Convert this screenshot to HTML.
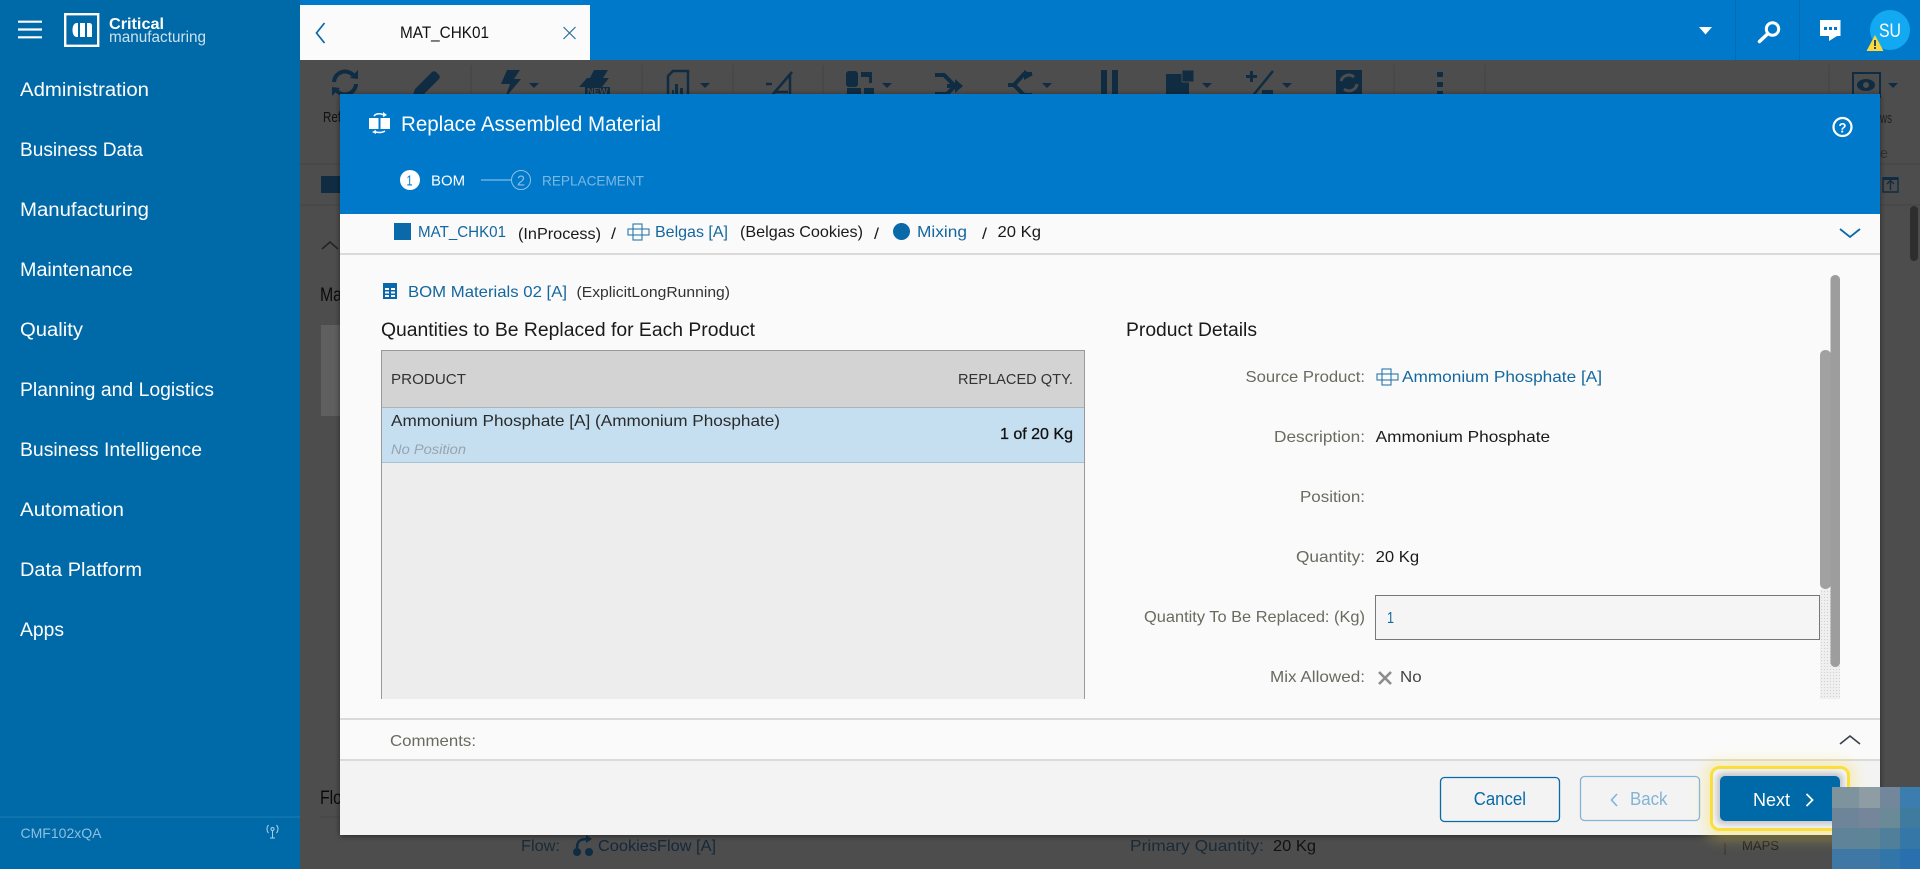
<!DOCTYPE html>
<html lang="en">
<head>
<meta charset="utf-8">
<title>Replace Assembled Material</title>
<style>
html,body{margin:0;padding:0;width:1920px;height:869px;overflow:hidden;background:#4d4d4d}
svg{display:block;position:absolute;left:0;top:0}
text{font-family:"Liberation Sans",sans-serif;font-size:16px;white-space:pre}
.m{font-size:19px;fill:#fff}
.link{fill:#14679f}
.lab{fill:#6a6a60}
.blk{fill:#1a1a1a}
.d{fill:#0f2c42}
.ds{fill:none;stroke:#0f2c42;stroke-width:4}
.sep{stroke:#444;stroke-width:1}
</style>
</head>
<body>
<svg width="1920" height="869" viewBox="0 0 1920 869" xmlns="http://www.w3.org/2000/svg">
<defs>
<filter id="blur" x="-30%" y="-60%" width="160%" height="220%"><feGaussianBlur stdDeviation="7"/></filter>
<filter id="sh" x="-5%" y="-5%" width="110%" height="110%"><feDropShadow dx="0" dy="1" stdDeviation="3" flood-color="#000" flood-opacity=".5"/></filter>
<filter id="bsh" x="-10%" y="-30%" width="120%" height="160%"><feGaussianBlur stdDeviation="3"/></filter>
<pattern id="dots" width="3" height="3" patternUnits="userSpaceOnUse"><rect width="3" height="3" fill="#efefef"/><rect width="1" height="1" fill="#d0d0d0"/></pattern>
</defs>

<!-- dimmed page behind -->
<rect x="300" y="60" width="1620" height="809" fill="#4d4d4d"/>
<g class="sep">
<line x1="471" y1="65" x2="471" y2="94"/><line x1="642" y1="65" x2="642" y2="94"/><line x1="733" y1="65" x2="733" y2="94"/><line x1="823" y1="65" x2="823" y2="94"/><line x1="1394" y1="65" x2="1394" y2="94"/><line x1="1485" y1="65" x2="1485" y2="94"/><line x1="1829" y1="65" x2="1829" y2="94"/>
<line x1="300" y1="164" x2="340" y2="164"/><line x1="1880" y1="164" x2="1920" y2="164"/>
<line x1="300" y1="205" x2="340" y2="205"/><line x1="1880" y1="205" x2="1920" y2="205"/>
<line x1="320" y1="817" x2="340" y2="817"/>
</g>
<!-- toolbar icons -->
<path class="ds" d="M334 82a11 11 0 0 1 19-7M356 84a11 11 0 0 1-19 7"/>
<path class="d" d="M350 78l8-8v9zM340 88l-8 8v-9z"/>
<path class="d" d="M411 100l4-11L432 72a3 3 0 0 1 4 0l3 3a3 3 0 0 1 0 4L422 96z"/>
<path class="d" d="M507 70h13l-6 9h7l-16 19 5-14h-9z"/>
<path class="d" d="M529 83h10l-5 5z"/>
<path class="d" d="M594 70h14l-5 8h6l-7 9h-23l8-9h3z"/>
<rect x="585" y="87" width="25" height="8" fill="#0f2c42"/>
<text x="587" y="94" textLength="21" lengthAdjust="spacingAndGlyphs" font-size="8" font-weight="700" fill="#4d4d4d" style="font-size:8px">NEW</text>
<path class="ds" style="stroke-width:2.500" d="M668 94V76l5-5h15v23"/>
<path class="d" d="M675 84h3v10h-3zM680 88h3v6h-3zM672 90h2v4h-2z"/>
<path class="d" d="M700 83h10l-5 5z"/>
<path class="ds" style="stroke-width:2.500" d="M766 84h6M768 100l24-28M790 74v20M774 92h14"/>
<rect x="846" y="71" width="12" height="16" rx="3" fill="#0f2c42"/>
<path class="d" d="M861 72h11v11h-3v-6h-8zM847 88h14v6h-14zM864 88h10v6h-10z"/>
<path class="d" d="M882 83h10l-5 5z"/>
<path class="ds" d="M935 75h9l11 11-8 8h-12M947 86h14"/>
<path class="d" d="M955 79l8 7-8 7z"/>
<path class="ds" d="M1008 85h6l10-11h8M1014 85l10 10h8"/>
<path class="d" d="M1024 70l9 5-9 5zM1042 83h10l-5 5z"/>
<rect x="1101" y="70" width="6" height="24" fill="#0f2c42"/><rect x="1112" y="70" width="6" height="24" fill="#0f2c42"/>
<rect x="1166" y="74" width="23" height="20" fill="#0f2c42"/><rect x="1182" y="70" width="12" height="12" fill="#0f2c42" stroke="#4d4d4d" stroke-width="1"/>
<path class="d" d="M1202 83h10l-5 5z"/>
<path class="d" d="M1246 75h4v-4h3v4h4v3h-4v4h-3v-4h-4z"/>
<path class="ds" style="stroke-width:2.500" d="M1251 98l22-27"/>
<rect x="1262" y="90" width="11" height="4" fill="#0f2c42"/>
<path class="d" d="M1282 83h10l-5 5z"/>
<rect x="1336" y="70" width="26" height="24" fill="#0f2c42"/>
<path fill="none" stroke="#4d4d4d" stroke-width="3" d="M1341 81a8 8 0 0 1 13-4M1357 84a8 8 0 0 1-13 5"/>
<rect x="1437" y="72" width="6" height="5" fill="#0f2c42"/><rect x="1437" y="82" width="6" height="5" fill="#0f2c42"/><rect x="1437" y="91" width="6" height="3" fill="#0f2c42"/>
<rect x="1853" y="73" width="27" height="24" fill="none" stroke="#0f2c42" stroke-width="2"/>
<ellipse cx="1866" cy="85" rx="9" ry="6" fill="#0f2c42"/><circle cx="1866" cy="85" r="3" fill="#4d4d4d"/>
<path class="d" d="M1888 83h10l-5 5z"/>
<text x="323" y="122" textLength="18" lengthAdjust="spacingAndGlyphs" style="font-size:15px" fill="#111">Ref</text>
<text x="1880" y="123" textLength="12" lengthAdjust="spacingAndGlyphs" style="font-size:15px" fill="#222">ws</text>
<text x="1880" y="158" textLength="8" lengthAdjust="spacingAndGlyphs" style="font-size:15px" fill="#333">e</text>
<rect x="321" y="176" width="19" height="17" fill="#0f2c42"/>
<path fill="none" stroke="#222" stroke-width="1.500" d="M322 249l8-7 8 7"/>
<text x="320" y="301" textLength="22" lengthAdjust="spacingAndGlyphs" style="font-size:19px" fill="#0a0a0a">Ma</text>
<rect x="321" y="325" width="19" height="91" fill="#5f5f5f"/>
<text x="320" y="804" textLength="22" lengthAdjust="spacingAndGlyphs" style="font-size:19px" fill="#0a0a0a">Flo</text>
<path fill="none" stroke="#0f2c42" stroke-width="1.400" d="M1883 178h15v14h-15zM1890.500 190v-9M1887 184l3.500-3.500 3.500 3.500"/>
<rect x="1883" y="177" width="15" height="3" fill="#0f2c42"/>
<rect x="1910" y="206" width="8" height="55" rx="4" fill="#2e2e2e"/>
<text x="521" y="851" textLength="39" lengthAdjust="spacingAndGlyphs" fill="#1a2a36">Flow:</text>
<circle cx="577" cy="852" r="4" fill="#0f2c42"/><circle cx="589" cy="852" r="4" fill="#0f2c42"/>
<path fill="none" stroke="#0f2c42" stroke-width="2.500" d="M577 848c0-8 4-9 12-9"/><path class="d" d="M586 835l6 4-6 4z"/>
<text x="598" y="851" textLength="118" lengthAdjust="spacingAndGlyphs" fill="#14283a">CookiesFlow [A]</text>
<text x="1130" y="851" textLength="134" lengthAdjust="spacingAndGlyphs" fill="#1a2a36">Primary Quantity:</text>
<text x="1273" y="851" textLength="43" lengthAdjust="spacingAndGlyphs" fill="#111">20 Kg</text>
<text x="1742" y="850" textLength="37" lengthAdjust="spacingAndGlyphs" style="font-size:13px" fill="#1e1e1e">MAPS</text>
<line x1="1725" y1="843" x2="1725" y2="855" stroke="#333"/>

<!-- top bar -->
<rect x="300" y="0" width="1620" height="60" fill="#0079ca"/>
<rect x="300" y="5" width="290" height="55" fill="#fbfbfb"/>
<path fill="none" stroke="#0a69a8" stroke-width="1.700" d="M324.500 23l-8 10 8 10"/>
<text x="400" y="38" textLength="89" lengthAdjust="spacingAndGlyphs" style="font-size:17px" fill="#111">MAT_CHK01</text>
<path fill="none" stroke="#2a6f9c" stroke-width="1.200" d="M563.500 27l12 12M575.500 27l-12 12"/>
<line x1="1735.500" y1="0" x2="1735.500" y2="60" stroke="#006cb5"/>
<line x1="1799.500" y1="0" x2="1799.500" y2="60" stroke="#006cb5"/>
<path fill="#fff" d="M1699 27h13l-6.500 7.500z"/>
<circle cx="1772.500" cy="29" r="6.200" fill="none" stroke="#fff" stroke-width="3"/>
<path stroke="#fff" stroke-width="3.500" stroke-linecap="round" d="M1767.500 34l-8 7.500"/>
<path fill="#fff" d="M1820 20h20.500v16h-3.500l-8 5v-5h-9z"/>
<rect x="1824" y="27" width="3" height="3" fill="#0079ca"/><rect x="1829" y="27" width="3" height="3" fill="#0079ca"/><rect x="1834" y="27" width="3" height="3" fill="#0079ca"/>
<ellipse cx="1890" cy="30" rx="20" ry="20" fill="#12a9f2"/>
<text x="1879" y="37" textLength="22" lengthAdjust="spacingAndGlyphs" style="font-size:19px" fill="#fff">SU</text>
<path fill="#fbd93c" d="M1875 35l8.500 16h-17z"/>
<rect x="1874" y="40" width="2" height="6" fill="#2d4a5a"/><rect x="1874" y="47" width="2" height="2" fill="#2d4a5a"/>

<!-- sidebar -->
<rect x="0" y="0" width="300" height="869" fill="#0069a7"/>
<g stroke="#fff" stroke-width="2.200"><line x1="18" y1="21.700" x2="42" y2="21.700"/><line x1="18" y1="29.500" x2="42" y2="29.500"/><line x1="18" y1="37.300" x2="42" y2="37.300"/></g>
<rect x="65.200" y="14.200" width="33" height="31.600" fill="none" stroke="#fff" stroke-width="2.400"/>
<path fill="#fff" d="M78 23h-1c-3 0-4.500 3-4.500 7s1.500 7 4.500 7h1zM80 23h5v14h-5zM87 23h2c2 0 3 1 3 3v11h-5z"/>
<text x="109" y="29" textLength="55" lengthAdjust="spacingAndGlyphs" style="font-size:16px" font-weight="700" fill="#fff">Critical</text>
<text x="109" y="42" textLength="97" lengthAdjust="spacingAndGlyphs" style="font-size:16px" fill="#cde1ef">manufacturing</text>
<text class="m" x="20" y="96" textLength="129" lengthAdjust="spacingAndGlyphs">Administration</text>
<text class="m" x="20" y="156" textLength="123" lengthAdjust="spacingAndGlyphs">Business Data</text>
<text class="m" x="20" y="216" textLength="129" lengthAdjust="spacingAndGlyphs">Manufacturing</text>
<text class="m" x="20" y="276" textLength="113" lengthAdjust="spacingAndGlyphs">Maintenance</text>
<text class="m" x="20" y="336" textLength="63" lengthAdjust="spacingAndGlyphs">Quality</text>
<text class="m" x="20" y="396" textLength="194" lengthAdjust="spacingAndGlyphs">Planning and Logistics</text>
<text class="m" x="20" y="456" textLength="182" lengthAdjust="spacingAndGlyphs">Business Intelligence</text>
<text class="m" x="20" y="516" textLength="104" lengthAdjust="spacingAndGlyphs">Automation</text>
<text class="m" x="20" y="576" textLength="122" lengthAdjust="spacingAndGlyphs">Data Platform</text>
<text class="m" x="20" y="636" textLength="44" lengthAdjust="spacingAndGlyphs">Apps</text>
<line x1="0" y1="817" x2="300" y2="817" stroke="#1477b0" stroke-width="1.500"/>
<text x="20.500" y="838" textLength="81" lengthAdjust="spacingAndGlyphs" style="font-size:14px" fill="#8dbfe0">CMF102xQA</text>
<g fill="none" stroke="#a5cfe8" stroke-width="1"><circle cx="272.500" cy="829" r="1.500"/><path d="M272.500 830v8M270 838h5M268.500 825a6 6 0 0 0 0 8M276.500 825a6 6 0 0 1 0 8"/></g>

<!-- modal -->
<g filter="url(#sh)"><rect x="340" y="94" width="1540" height="741" fill="#fafafa"/></g>
<rect x="340" y="94" width="1540" height="120" fill="#0079ca"/>
<rect x="369" y="118" width="9.500" height="11" fill="#fff"/><rect x="380.500" y="118" width="9.500" height="11" fill="#fff"/>
<path fill="none" stroke="#fff" stroke-width="1.600" d="M374 116c2-3 8-3 11 0M374 131c3 2 8 2 11 0"/>
<path fill="#fff" d="M383 112l4 3-4 2zM376 130l-4 2 4 2z"/>
<text x="401" y="131" textLength="260" lengthAdjust="spacingAndGlyphs" style="font-size:21px" fill="#fff">Replace Assembled Material</text>
<circle cx="1842.500" cy="127" r="9" fill="none" stroke="#fff" stroke-width="2.200"/>
<text x="1838.500" y="132.500" textLength="8" lengthAdjust="spacingAndGlyphs" style="font-size:14px" font-weight="700" fill="#fff">?</text>
<circle cx="410" cy="180" r="10" fill="#fff"/>
<text x="406.500" y="185.500" textLength="6" lengthAdjust="spacingAndGlyphs" style="font-size:15px" fill="#0079ca">1</text>
<text x="431" y="185.500" textLength="34" lengthAdjust="spacingAndGlyphs" style="font-size:15px" fill="#fff">BOM</text>
<line x1="481" y1="180" x2="511" y2="180" stroke="#9fcbea" stroke-width="1"/>
<circle cx="521" cy="180" r="9.500" fill="none" stroke="#8cc0e6" stroke-width="1"/>
<text x="517" y="185.500" textLength="8" lengthAdjust="spacingAndGlyphs" style="font-size:15px" fill="#8cc0e6">2</text>
<text x="542" y="185.500" textLength="102" lengthAdjust="spacingAndGlyphs" style="font-size:14px" fill="#7db8e3">REPLACEMENT</text>

<!-- breadcrumb -->
<line x1="340" y1="254" x2="1880" y2="254" stroke="#cfcfcf" stroke-width="1.500"/>
<rect x="394" y="223" width="17" height="17" fill="#0a69a8"/>
<text class="link" x="418" y="237" textLength="88" lengthAdjust="spacingAndGlyphs">MAT_CHK01</text>
<text class="blk" x="518" y="239" textLength="83" lengthAdjust="spacingAndGlyphs">(InProcess)</text>
<text class="blk" x="611" y="239" textLength="5" lengthAdjust="spacingAndGlyphs">/</text>
<g fill="none" stroke="#2a78ab" stroke-width="1.100"><rect x="633" y="224" width="9" height="16"/><rect x="628" y="229" width="21" height="6"/></g>
<text class="link" x="655" y="237" textLength="73" lengthAdjust="spacingAndGlyphs">Belgas [A]</text>
<text class="blk" x="740" y="237" textLength="123" lengthAdjust="spacingAndGlyphs">(Belgas Cookies)</text>
<text class="blk" x="874" y="239" textLength="5" lengthAdjust="spacingAndGlyphs">/</text>
<circle cx="901.500" cy="231.500" r="8.500" fill="#0a69a8"/>
<text class="link" x="917" y="237" textLength="50" lengthAdjust="spacingAndGlyphs">Mixing</text>
<text class="blk" x="982" y="239" textLength="5" lengthAdjust="spacingAndGlyphs">/</text>
<text class="blk" x="997.500" y="237" textLength="43.500" lengthAdjust="spacingAndGlyphs">20 Kg</text>
<path fill="none" stroke="#0a69a8" stroke-width="1.800" d="M1840 229l10 8 10-8"/>

<!-- BOM -->
<rect x="383" y="283" width="14" height="16" fill="#0a69a8"/>
<path fill="#fff" d="M385 288h4v2h-4zM391 288h4v2h-4zM385 291.500h4v2h-4zM391 291.500h4v2h-4zM385 295h4v2h-4zM391 295h4v2h-4z"/>
<text class="link" x="408" y="297" textLength="159" lengthAdjust="spacingAndGlyphs">BOM Materials 02 [A]</text>
<text x="576.500" y="297" textLength="153.500" lengthAdjust="spacingAndGlyphs" style="font-size:15px" fill="#333">(ExplicitLongRunning)</text>
<text x="381" y="336" textLength="374" lengthAdjust="spacingAndGlyphs" style="font-size:19px" fill="#1a1a1a">Quantities to Be Replaced for Each Product</text>
<text x="1126" y="336" textLength="131" lengthAdjust="spacingAndGlyphs" style="font-size:19px" fill="#1a1a1a">Product Details</text>

<!-- table -->
<rect x="381.500" y="350.500" width="703" height="349" fill="#ededed" stroke="#999"/>
<rect x="382" y="351" width="702" height="56" fill="#d3d3d3"/>
<line x1="382" y1="407.500" x2="1084" y2="407.500" stroke="#aeb3b6"/>
<text x="391" y="384" textLength="75" lengthAdjust="spacingAndGlyphs" style="font-size:15px" fill="#333">PRODUCT</text>
<text x="958" y="384" textLength="115" lengthAdjust="spacingAndGlyphs" style="font-size:15px" fill="#333">REPLACED QTY.</text>
<rect x="382" y="408" width="702" height="54" fill="#c5dff0"/>
<line x1="382" y1="462.500" x2="1084" y2="462.500" stroke="#a6c3d6"/>
<text x="391" y="426" textLength="389" lengthAdjust="spacingAndGlyphs" fill="#2a2a2a">Ammonium Phosphate [A] (Ammonium Phosphate)</text>
<text x="391" y="454" textLength="75" lengthAdjust="spacingAndGlyphs" style="font-size:14px" font-style="italic" fill="#97a5ae">No Position</text>
<text x="1000" y="439" textLength="73" lengthAdjust="spacingAndGlyphs" fill="#111" stroke="#111" stroke-width=".3">1 of 20 Kg</text>
<rect x="340" y="699" width="1540" height="20" fill="#fafafa"/>

<!-- details -->
<text class="lab" x="1245.500" y="382" textLength="119.500" lengthAdjust="spacingAndGlyphs">Source Product:</text>
<g fill="none" stroke="#2a78ab" stroke-width="1.100"><rect x="1382" y="369" width="9" height="16"/><rect x="1377" y="374" width="21" height="6"/></g>
<text class="link" x="1402" y="382" textLength="200" lengthAdjust="spacingAndGlyphs">Ammonium Phosphate [A]</text>
<text class="lab" x="1274" y="442" textLength="91" lengthAdjust="spacingAndGlyphs">Description:</text>
<text class="blk" x="1375.600" y="442" textLength="174.500" lengthAdjust="spacingAndGlyphs">Ammonium Phosphate</text>
<text class="lab" x="1300" y="502" textLength="65" lengthAdjust="spacingAndGlyphs">Position:</text>
<text class="lab" x="1296" y="562" textLength="69" lengthAdjust="spacingAndGlyphs">Quantity:</text>
<text class="blk" x="1375.600" y="562" textLength="43.500" lengthAdjust="spacingAndGlyphs">20 Kg</text>
<text class="lab" x="1144" y="622" textLength="221" lengthAdjust="spacingAndGlyphs">Quantity To Be Replaced: (Kg)</text>
<rect x="1375.500" y="595.500" width="444" height="44" fill="#f5f5f5" stroke="#777"/>
<text class="link" x="1387" y="623" textLength="7" lengthAdjust="spacingAndGlyphs">1</text>
<text class="lab" x="1270" y="682" textLength="95" lengthAdjust="spacingAndGlyphs">Mix Allowed:</text>
<path fill="none" stroke="#8c8c8c" stroke-width="2.600" d="M1379 672l12 12M1391 672l-12 12"/>
<text x="1400" y="682" textLength="21.600" lengthAdjust="spacingAndGlyphs" fill="#444">No</text>

<!-- scrollbars -->
<rect x="1820" y="589" width="20" height="110" fill="url(#dots)"/>
<rect x="1820" y="350" width="11" height="239" rx="5" fill="#a1a1a1"/>
<rect x="1830.500" y="275" width="9.500" height="392" rx="4.500" fill="#9d9d9d"/>

<!-- comments + footer -->
<line x1="340" y1="719" x2="1880" y2="719" stroke="#cfcfcf" stroke-width="1.500"/>
<text class="lab" x="390" y="746" textLength="86" lengthAdjust="spacingAndGlyphs">Comments:</text>
<path fill="none" stroke="#36424a" stroke-width="1.600" d="M1840 744l10-8 10 8"/>
<rect x="340" y="761" width="1540" height="74" fill="#f3f3f3"/>
<line x1="340" y1="760" x2="1880" y2="760" stroke="#cfcfcf" stroke-width="1.500"/>
<rect x="1440.500" y="777.500" width="119" height="44" rx="4" fill="none" stroke="#0a69a8" stroke-width="1.300"/>
<text x="1473.700" y="805" textLength="52.300" lengthAdjust="spacingAndGlyphs" style="font-size:18px" fill="#0a69a8">Cancel</text>
<rect x="1580.500" y="776.500" width="119" height="44" rx="4" fill="none" stroke="#82b4d5" stroke-width="1.300"/>
<path fill="none" stroke="#82b4d5" stroke-width="1.600" d="M1617 794l-5.500 6 5.500 6"/>
<text x="1630" y="805" textLength="37.500" lengthAdjust="spacingAndGlyphs" style="font-size:18px" fill="#82b4d5">Back</text>

<!-- highlighted next button -->
<rect x="1706" y="762" width="148" height="76" rx="12" fill="#fbe04a" opacity=".42" filter="url(#blur)"/>
<rect x="1711.500" y="767.500" width="137" height="62" rx="8" fill="#f4f4f4" stroke="#fbdf3a" stroke-width="3"/>
<rect x="1717" y="773" width="126" height="51" rx="6" fill="#9b9ba2" opacity=".55" filter="url(#bsh)"/>
<rect x="1720" y="776" width="120" height="45" rx="5" fill="#0069a7"/>
<text x="1753" y="806" textLength="37" lengthAdjust="spacingAndGlyphs" style="font-size:18px" fill="#fff">Next</text>
<path fill="none" stroke="#fff" stroke-width="1.800" d="M1806.500 794l6 6-6 6"/>

<!-- pixelated block -->
<g shape-rendering="crispEdges">
<rect x="1832" y="787" width="27" height="21" fill="#7d949e"/><rect x="1859" y="787" width="21" height="21" fill="#8e9ca3"/><rect x="1880" y="787" width="20" height="21" fill="#72879b"/><rect x="1900" y="787" width="20" height="21" fill="#3b7dae"/>
<rect x="1832" y="808" width="27" height="20" fill="#6d8499"/><rect x="1859" y="808" width="21" height="20" fill="#75869a"/><rect x="1880" y="808" width="20" height="20" fill="#6a8a98"/><rect x="1900" y="808" width="20" height="20" fill="#3f7b9f"/>
<rect x="1832" y="828" width="27" height="21" fill="#5f8499"/><rect x="1859" y="828" width="21" height="21" fill="#5e8597"/><rect x="1880" y="828" width="20" height="21" fill="#4f7f9b"/><rect x="1900" y="828" width="20" height="21" fill="#3577a7"/>
<rect x="1832" y="849" width="27" height="20" fill="#3f78a5"/><rect x="1859" y="849" width="21" height="20" fill="#3f78a4"/><rect x="1880" y="849" width="20" height="20" fill="#3275a8"/><rect x="1900" y="849" width="20" height="20" fill="#2b70ae"/>
</g>
</svg>
</body>
</html>
